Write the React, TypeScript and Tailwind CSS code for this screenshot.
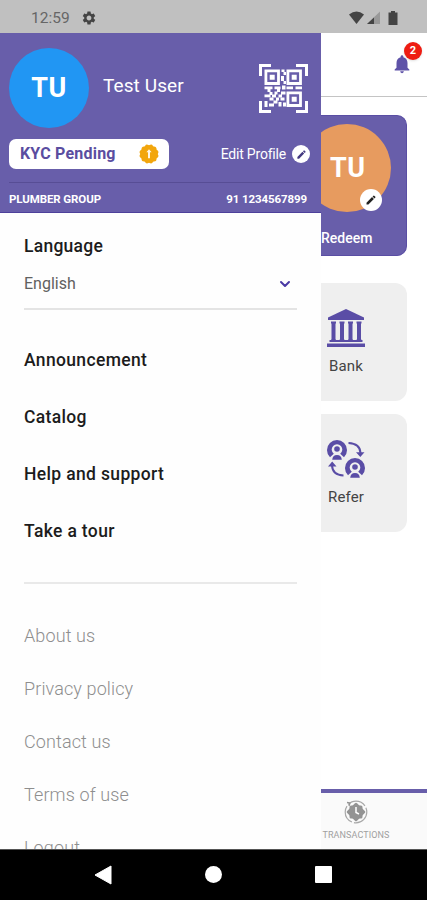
import type { ReactNode } from 'react';
import { MdEdit, MdNotifications, MdSettings } from 'react-icons/md';
import { ChevronDown } from 'lucide-react';

const mainLinks = ['Announcement', 'Catalog', 'Help and support', 'Take a tour'];
const footerLinks = ['About us', 'Privacy policy', 'Contact us', 'Terms of use', 'Logout'];

function StatusBar() {
  return (
    <div className="flex h-[33px] shrink-0 items-center justify-between bg-[#c0c0c0] pl-[31px] pr-[29px] pt-[2px] text-[#444]">
      <div className="flex items-center gap-[11px]">
        <span className="text-[15.5px] leading-5 text-[#666]">12:59</span>
        <MdSettings className="h-4 w-4" />
      </div>
      <svg viewBox="0 0 50 16" className="h-4 w-[50px]">
        <path d="M1 4.5Q8.5-1.5 16 4.5L8.5 14Z" fill="#444" />
        <path d="M32 1.5V14H19Z" fill="#999" />
        <path d="M26 7.5V14H19Z" fill="#444" />
        <path d="M40.500 2.500h2.500V1h4v1.500h2.500V15h-9Z" fill="#444" />
      </svg>
    </div>
  );
}

function QrIcon() {
  return (
    <svg viewBox="0 0 49 49" className="h-[49px] w-[49px]" fill="none" stroke="#fff">
      <path strokeWidth="3" d="M1.5 12V1.5H12M37 1.5h10.500V12M47.500 37v10.500H37M12 47.500H1.500V37" />
      <path strokeWidth="2.8" d="M6.900 6.900h12.600v12.600H6.900ZM28.900 6.900h12.600v12.600H28.900ZM28.900 28.900h12.600v12.600H28.900Z" />
      <g fill="#fff" stroke="none">
        <path d="M10.700 10.700h5v5h-5ZM32.700 10.700h5v5h-5ZM32.700 32.700h5v5h-5Z" />
        <path d="M22.500 5.500h3v2.500h-3ZM24.500 8h2.500v3h-2.500ZM22 12h3v5h-3ZM24.500 17h2.500v3h-2.500Z" />
        <path d="M5.500 22.500h8v2.800h-8ZM15.500 22.500h6v2.800h-6ZM23 21.500h3.500v4h-3.500ZM27.500 22.500h6.500v2.800h-6.500ZM36.500 22.500h6.500v2.800H36.500Z" />
        <path d="M8.500 25h3v3h-3ZM18 25h3v3h-3ZM15.500 27.500h3v3h-3ZM10.500 28h3v3h-3ZM5.500 30.500h6v2.800h-6ZM13 30.500h4v3h-4ZM22 27.500h4.500v3h-4.500ZM19.500 30.500h3.500v3h-3.500Z" />
        <path d="M10.500 33.500h4v3h-4ZM5.500 37h3v6h-3ZM10 39.500h5v3h-5ZM17 33.500h3v3h-3ZM14.500 36.500h4v3h-4ZM21.500 33.500h4v3h-4ZM19.500 38h3v4.500h-3ZM24 38.500h3v4h-3Z" />
      </g>
    </svg>
  );
}

function PendingBadge() {
  return (
    <svg viewBox="0 0 20 20" className="h-5 w-5" fill="#f2a60d">
      <rect x="2.500" y="2.500" width="15" height="15" rx="2.500" />
      <rect x="2.500" y="2.500" width="15" height="15" rx="2.500" transform="rotate(30 10 10)" />
      <rect x="2.500" y="2.500" width="15" height="15" rx="2.500" transform="rotate(60 10 10)" />
      <path d="M10 5.300L12.600 8.200H11v6H9v-6H7.400Z" fill="#fff" fillOpacity="0.9" />
    </svg>
  );
}

function BankIcon() {
  return (
    <svg viewBox="0 0 38 38" className="h-[38px] w-[38px]" fill="#5a4da6">
      <path d="M19 0L37 8.500V11H1V8.500Z" />
      <path d="M4 12.500h5v2H8.500v16H9v2H4v-2h.500v-16H4ZM12.500 12.500h5v2H17v16h.500v2h-5v-2h.500v-16h-.500ZM21 12.500h5v2h-.500v16h.500v2h-5v-2h.500v-16H21ZM29.500 12.500h5v2H34v16h.500v2h-5v-2h.500v-16h-.500Z" />
      <path d="M2.500 31h33v2h-33ZM0 34.500h38V38H0Z" />
    </svg>
  );
}

function Person({ x, y }: { x: number; y: number }) {
  return (
    <g transform={`translate(${x} ${y})`}>
      <path d="M-7 7.200A10 10 0 1 1 7 7.200L3.200 3.800A5.300 5.300 0 1 0-3.200 3.800Z" fill="#5a4da6" />
      <circle cx="0" cy="-1" r="2.800" fill="#5a4da6" />
      <path d="M-4.800 9.800Q-4.500 5 0 5T4.800 9.800Z" fill="#5a4da6" />
    </g>
  );
}

function ReferIcon() {
  return (
    <svg viewBox="0 0 38 38" className="h-[38px] w-[38px]">
      <Person x={10} y={10} />
      <Person x={28} y={28} />
      <g fill="none" stroke="#5a4da6" strokeWidth="2">
        <path d="M21.500 3Q33 3.500 33.500 13" />
        <path d="M16.500 35.500Q5.500 35 5 25.500" />
      </g>
      <path d="M29 12.300h8.500l-4.200 4.800ZM1 26.500h8.500L5.200 21.500Z" fill="#5a4da6" />
    </svg>
  );
}

function TransactionsIcon() {
  return (
    <svg viewBox="0 0 24 24" className="h-6 w-6">
      <circle cx="12" cy="12" r="10.800" fill="none" stroke="#a8a8a8" strokeWidth="1.200" strokeDasharray="19 2" />
      <g fill="#939393">
        <rect x="5.500" y="5.500" width="13" height="13" rx="1.500" />
        <rect x="5" y="5" width="14" height="14" rx="1.500" transform="rotate(45 12 12)" />
      </g>
      <path d="M12 7v5.500l3 1.500" fill="none" stroke="#fff" strokeWidth="1.500" />
      <path d="M3 2.500l3 .5-1 3" fill="none" stroke="#939393" strokeWidth="1.300" />
    </svg>
  );
}

function Drawer() {
  return (
    <aside className="flex w-[321px] shrink-0 flex-col overflow-hidden bg-[#fefefe]">
      <div className="flex h-[180px] shrink-0 flex-col border-b border-[#4d409b] bg-[#685eaa] text-white">
        <div className="flex h-[106px] items-start pl-[9px] pr-[13px]">
          <div className="mt-[15px] flex h-20 w-20 items-center justify-center rounded-full bg-[#2196f3] text-[27px] font-bold tracking-[0.5px]">
            TU
          </div>
          <span className="ml-[14px] mt-[41px] text-[19px] leading-6 tracking-[0.1px]">Test User</span>
          <div className="ml-auto mt-[31px]">
            <QrIcon />
          </div>
        </div>
        <div className="flex items-center justify-between pl-[9px] pr-[11px]">
          <div className="flex h-[30px] w-40 items-center justify-between rounded-[7px] bg-white pl-[11px] pr-[10px]">
            <span className="text-[16px] font-bold tracking-[0.2px] text-[#5a4da0]">KYC Pending</span>
            <PendingBadge />
          </div>
          <div className="flex items-center gap-[6px]">
            <span className="text-[14px] tracking-[-0.2px]">Edit Profile</span>
            <div className="flex h-[18px] w-[18px] items-center justify-center rounded-full bg-white text-[#443a80]">
              <MdEdit className="h-[11px] w-[11px]" />
            </div>
          </div>
        </div>
        <div className="ml-[9px] mr-[11px] mt-[13px] h-px bg-[#574d95]" />
        <div className="flex items-center justify-between pl-[9px] pr-[14px] pt-[8px] text-[11.500px] font-bold leading-4 tracking-[-0.1px]">
          <span>PLUMBER GROUP</span>
          <span>91 1234567899</span>
        </div>
      </div>

      <div className="flex flex-col pl-6 pr-6 pt-[21px]">
        <span className="text-[17.500px] font-medium leading-6 tracking-[0.25px] text-[#1c1c1c]">Language</span>
        <div className="mt-[14px] flex h-6 items-center justify-between pr-[4px]">
          <span className="text-[16px] text-[#606060]">English</span>
          <ChevronDown className="h-4 w-4 text-[#4a3aa5]" strokeWidth={3} />
        </div>
        <div className="mt-[12px] h-[2px] bg-[#e4e4e4]" />
        <nav className="mt-[22px] flex flex-col">
          {mainLinks.map((label) => (
            <a key={label} className="flex h-[57px] items-center text-[17.500px] font-medium tracking-[0.35px] text-[#1c1c1c]">
              {label}
            </a>
          ))}
        </nav>
        <div className="mt-[22px] h-[2px] bg-[#e9e9e9]" />
        <nav className="mt-[25px] flex flex-col">
          {footerLinks.map((label) => (
            <a key={label} className="flex h-[53px] items-center text-[18px] font-light tracking-[0.12px] text-[#8e8e8e]">
              {label}
            </a>
          ))}
        </nav>
      </div>
    </aside>
  );
}

function Tile({ icon, label }: { icon: ReactNode; label: string }) {
  return (
    <div className="flex h-[118px] w-[86px] flex-col items-center rounded-r-[12px] bg-[#efefef] pr-9 pt-[26px]">
      {icon}
      <span className="mt-[9px] text-[15px] leading-5 tracking-[0.1px] text-[#444]">{label}</span>
    </div>
  );
}

function HomePanel() {
  return (
    <main className="flex min-w-0 flex-1 flex-col overflow-hidden bg-white">
      <div className="flex h-16 shrink-0 items-start justify-end border-b border-[#c4c4c4] pr-[14px] pt-[20px]">
        <div className="relative">
          <MdNotifications className="h-[22px] w-[22px] text-[#5e52a8]" />
          <span className="absolute -top-[11px] left-[13px] flex h-[18px] w-[18px] items-center justify-center rounded-full bg-[#ee1c12] text-[11px] font-bold text-white shadow">
            2
          </span>
        </div>
      </div>
      <div className="mt-[18px] flex h-[141px] w-[86px] shrink-0 flex-col rounded-r-[10px] border-y border-r border-[#5a4ea4] bg-[#685eaa] pt-[8px] text-white">
        <div className="relative flex h-[88px] items-center">
          <div className="flex h-[88px] w-[70px] justify-end overflow-hidden">
            <div className="flex h-[88px] w-[88px] shrink-0 items-center rounded-full bg-[#e79b5f] pl-[27px]">
              <span className="text-[27px] font-bold tracking-[0.5px]">TU</span>
            </div>
          </div>
          <div className="absolute left-[39px] top-[65px] flex h-[22px] w-[22px] items-center justify-center rounded-full bg-white text-[#222]">
            <MdEdit className="h-[12px] w-[12px]" />
          </div>
        </div>
        <span className="mt-4 text-[14px] font-medium leading-5">Redeem</span>
      </div>
      <div className="mt-[27px] flex flex-col gap-[13px]">
        <Tile icon={<BankIcon />} label="Bank" />
        <Tile icon={<ReferIcon />} label="Refer" />
      </div>
      <div className="mt-auto flex h-[60px] shrink-0 flex-col items-center border-t-4 border-[#685eaa] bg-[#fafafa] pr-9 pt-[7px]">
        <TransactionsIcon />
        <span className="mt-[5px] text-[9px] leading-3 tracking-[0.1px] text-[#a0a0a0]">TRANSACTIONS</span>
      </div>
    </main>
  );
}

export default function App() {
  return (
    <div className="flex h-[900px] w-[427px] flex-col overflow-hidden bg-white font-['Roboto',sans-serif]">
      <StatusBar />
      <div className="flex min-h-0 flex-1">
        <Drawer />
        <HomePanel />
      </div>
      <div className="flex h-[51px] shrink-0 items-center justify-between border-t border-[#555] bg-black pb-px pl-[94px] pr-[95px]">
        <svg viewBox="0 0 18 20" className="h-5 w-[18px]" fill="#fff">
          <path d="M17 1v18L1 10Z" stroke="#fff" strokeLinejoin="round" />
        </svg>
        <div className="h-[17px] w-[17px] rounded-full bg-white" />
        <div className="h-[17px] w-[17px] rounded-[1px] bg-white" />
      </div>
    </div>
  );
}
